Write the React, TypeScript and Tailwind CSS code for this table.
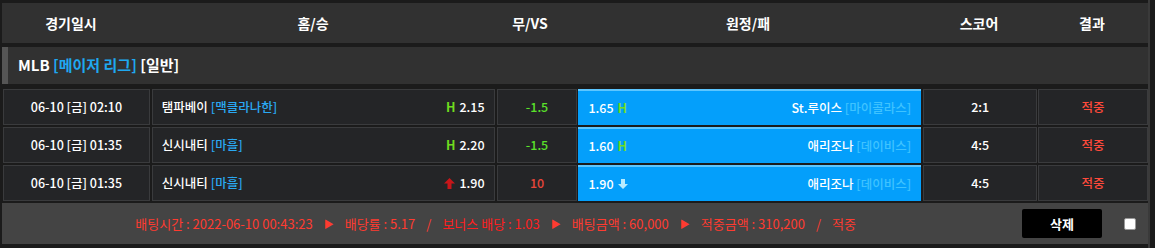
import React from "react";

const FONT = { fontFamily: '"Noto Sans CJK KR", "Noto Sans", sans-serif' };

type Row = {
  date: string;
  home: string;
  homeTag: string;
  homeMark: "H" | "up" | null;
  homeOdds: string;
  vs: string;
  vsColor: string;
  awayOdds: string;
  awayMark: "H" | "down" | null;
  away: string;
  awayTag: string;
  score: string;
  result: string;
};

const ROWS: Row[] = [
  {
    date: "06-10 [금] 02:10",
    home: "탬파베이",
    homeTag: "[맥클라나한]",
    homeMark: "H",
    homeOdds: "2.15",
    vs: "-1.5",
    vsColor: "text-[#5ae02a]",
    awayOdds: "1.65",
    awayMark: "H",
    away: "St.루이스",
    awayTag: "[마이콜라스]",
    score: "2:1",
    result: "적중",
  },
  {
    date: "06-10 [금] 01:35",
    home: "신시내티",
    homeTag: "[마흘]",
    homeMark: "H",
    homeOdds: "2.20",
    vs: "-1.5",
    vsColor: "text-[#5ae02a]",
    awayOdds: "1.60",
    awayMark: "H",
    away: "애리조나",
    awayTag: "[데이비스]",
    score: "4:5",
    result: "적중",
  },
  {
    date: "06-10 [금] 01:35",
    home: "신시내티",
    homeTag: "[마흘]",
    homeMark: "up",
    homeOdds: "1.90",
    vs: "10",
    vsColor: "text-[#e8453a]",
    awayOdds: "1.90",
    awayMark: "down",
    away: "애리조나",
    awayTag: "[데이비스]",
    score: "4:5",
    result: "적중",
  },
];

const Mark: React.FC<{ mark: Row["homeMark"] | Row["awayMark"] }> = ({ mark }) => {
  if (mark === "H") return <span className="font-bold text-[#6fdc1f]">H</span>;
  if (mark === "up")
    return (
      <svg width="11" height="11" viewBox="0 0 11 11">
        <path d="M5.5 0 L11 5.5 L7.5 5.5 L7.5 11 L3.5 11 L3.5 5.5 L0 5.5 Z" fill="#c8161a" />
      </svg>
    );
  if (mark === "down")
    return (
      <svg width="10" height="10" viewBox="0 0 10 10">
        <path d="M5 10 L10 5 L7 5 L7 0 L3 0 L3 5 L0 5 Z" fill="#b7ecff" />
      </svg>
    );
  return null;
};

const cell = "bg-[#242527] border border-[#3a3b3d] flex items-center";

const App: React.FC = () => {
  return (
    <div className="w-[1155px] h-[248px] bg-[#1b1b1b] flex text-[12.5px]" style={FONT}>
      <div className="w-[1146px] ml-[2px] flex flex-col pt-[3px]">
        {/* Header */}
        <div className="h-[40px] bg-[#313131] flex items-center text-white font-bold text-[14px]">
          <div className="w-[138px] text-center">경기일시</div>
          <div className="w-[346px] text-center">홈/승</div>
          <div className="w-[88px] text-center">무/VS</div>
          <div className="w-[348px] text-center">원정/패</div>
          <div className="w-[114px] text-center">스코어</div>
          <div className="w-[112px] text-center">결과</div>
        </div>

        {/* League */}
        <div className="mt-[4px] h-[37px] bg-[#313131] flex items-center">
          <div className="w-[6px] h-full bg-[#555555]" />
          <div className="pl-[10px] font-bold text-[15px] text-white">
            MLB <span className="text-[#1fa8f0]">[메이저 리그]</span> [일반]
          </div>
        </div>

        {/* Rows */}
        <div className="mt-[5px] ml-[1px] flex flex-col gap-[2px]">
          {ROWS.map((r, i) => (
            <div key={i} className="h-[36px] flex">
              <div className={`${cell} w-[147px] justify-center text-white font-medium`}>{r.date}</div>
              <div className={`${cell} w-[343px] ml-[2px] justify-between px-[9px] text-white font-medium`}>
                <span>
                  {r.home} <span className="text-[#2aa8f2]">{r.homeTag}</span>
                </span>
                <span className="flex items-center gap-[4px]">
                  <Mark mark={r.homeMark} />
                  {r.homeOdds}
                </span>
              </div>
              <div className={`${cell} w-[81px] ml-[2px] justify-center font-medium ${r.vsColor}`}>{r.vs}</div>
              <div className="w-[343px] ml-[1px] bg-[#049ffb] border-t-2 border-[#5cc6ff] flex items-center justify-between px-[10px] text-white font-medium">
                <span className="flex items-center gap-[4px]">
                  {r.awayOdds}
                  <Mark mark={r.awayMark} />
                </span>
                <span>
                  {r.away} <span className="text-[#3fc3ff]">{r.awayTag}</span>
                </span>
              </div>
              <div className={`${cell} w-[114px] ml-[2px] justify-center text-white font-medium`}>{r.score}</div>
              <div className={`${cell} w-[110px] ml-[1px] justify-center text-[#ff4a3b] font-medium`}>{r.result}</div>
            </div>
          ))}
        </div>

        {/* Footer */}
        <div className="mt-[2px] h-[41px] bg-[#444444] flex items-center justify-end pr-[12px]">
          <div className="flex items-center gap-[11px] text-[13px] text-[#ff3b30]">
            <span>배팅시간 : 2022-06-10 00:43:23</span>
            <span className="text-[10px]">▶</span>
            <span>배당률 : 5.17</span>
            <span>/</span>
            <span className="text-[#ff1f1f]">보너스 배당 : 1.03</span>
            <span className="text-[10px]">▶</span>
            <span>배팅금액 : 60,000</span>
            <span className="text-[10px]">▶</span>
            <span>적중금액 : 310,200</span>
            <span>/</span>
            <span>적중</span>
          </div>
          <button className="ml-[166px] w-[80px] h-[29px] bg-black rounded-[2px] text-white font-bold text-[13px]">
            삭제
          </button>
          <div className="ml-[22px] w-[12px] h-[12px] bg-white border border-[#999] rounded-[2px]" />
        </div>
      </div>
      <div className="w-[2px] bg-[#3a3a3a]" />
    </div>
  );
};

export default App;
